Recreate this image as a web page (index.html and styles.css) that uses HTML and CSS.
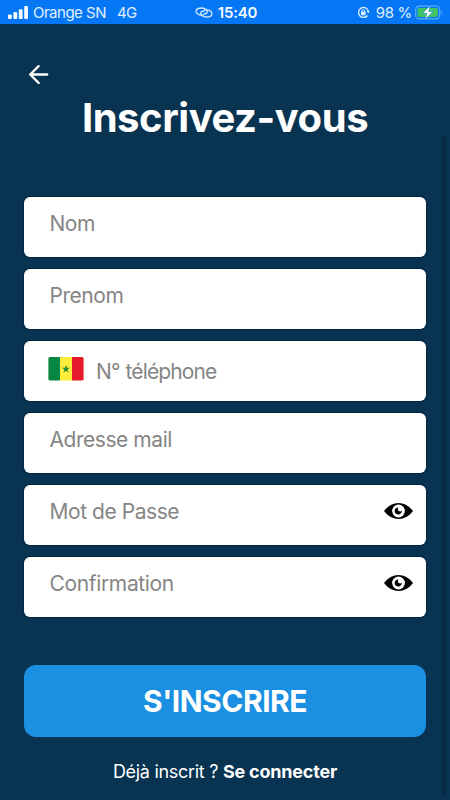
FILE: index.html
```html
<!DOCTYPE html>
<html lang="fr">
<head>
<meta charset="utf-8">
<title>Inscrivez-vous</title>
<link rel="stylesheet" href="styles.css">
</head>
<body>
<header class="status">
  <div class="status-left">
    <svg class="signal" width="20" height="13" viewBox="0 0 20 13" fill="#f4faff"><rect x="0" y="8.5" width="3.8" height="4.5" rx="1"/><rect x="5.4" y="6" width="3.8" height="7" rx="1"/><rect x="10.8" y="3.2" width="3.8" height="9.8" rx="1"/><rect x="16.2" y="0" width="3.8" height="13" rx="1"/></svg>
    <span class="carrier">Orange SN</span>
    <span class="network">4G</span>
  </div>
  <div class="status-center">
    <svg width="18" height="11" viewBox="0 0 18 11" fill="none" stroke="#d5eaff" stroke-width="1.300" stroke-linecap="round"><path d="M8.500 7.900C4.500 8.600 1 7 1 4.300S3.800 1 6.600 1c2.900 0 5.700 1.500 5.700 3.700 0 1.500-1.500 2.300-3.300 2.100"/><path d="M9.500 3.100C13.500 2.400 17 4 17 6.700S14.200 10 11.400 10c-2.900 0-5.700-1.500-5.700-3.700 0-1.500 1.500-2.300 3.300-2.100"/></svg>
    <span class="clock">15:40</span>
  </div>
  <div class="status-right">
    <svg width="13" height="13" viewBox="0 0 13 13" fill="none" stroke="#e2f1ff" stroke-width="1.300"><path d="M10.500 9.500A5 5 0 1 1 11.300 5"/><path d="M9.500 5h3.300l-1.600 2.300z" fill="#e2f1ff" stroke="none"/><rect x="4" y="5.800" width="4.600" height="3.400" rx=".5" fill="#e2f1ff" stroke="none"/><path d="M5 6V4.900a1.300 1.300 0 0 1 2.600 0V6" stroke-width="1"/></svg>
    <span class="percent">98 %</span>
    <svg class="battery" width="29" height="15" viewBox="0 0 29 15"><rect x=".7" y="1.200" width="24" height="12.600" rx="3.600" fill="none" stroke="#5cacf5" stroke-width="1.200"/><rect x="2.500" y="3" width="20.400" height="9" rx="2" fill="#3fc562"/><path d="M26.200 5.500c1.500.5 1.500 3.500 0 4z" fill="#5cacf5"/><path d="M15.200.6 7.600 8.300h4.200L10 14.400l8-7.900h-4.300z" fill="#fff" stroke="#0872e8" stroke-width=".5"/></svg>
  </div>
</header>
<main class="screen">
  <button class="back" type="button" aria-label="Retour">
    <svg width="21" height="20" viewBox="0 0 21 20" fill="none" stroke="#fff" stroke-width="2.300" stroke-linecap="round" stroke-linejoin="round"><path d="M19.200 10.500H2.200M10.600 2.100 2.200 10.500l8.400 8.400"/></svg>
  </button>
  <h1 class="title">Inscrivez-vous</h1>
  <form class="form">
    <div class="field"><span class="label nom">Nom</span></div>
    <div class="field"><span class="label prenom">Prenom</span></div>
    <div class="field phone">
      <svg class="flag" width="36" height="24" viewBox="0 0 36 24"><defs><clipPath id="round"><rect x=".4" width="35.200" height="23.500" rx="1.500"/></clipPath></defs><g clip-path="url(#round)"><path fill="#078543" d="M0 0h12v24H0z"/><path fill="#fcec3b" d="M12 0h12v24H12z"/><path fill="#e51b2b" d="M24 0h12v24H24z"/></g><path fill="#238c37" d="m18 8 1 2.800h3l-2.400 1.800.9 2.900-2.500-1.700-2.500 1.700.9-2.900-2.400-1.800h3z"/></svg>
      <span class="label tel">N° téléphone</span>
    </div>
    <div class="field"><span class="label mail">Adresse mail</span></div>
    <div class="field"><span class="label pass">Mot de Passe</span>
      <svg class="eye" width="29" height="16" viewBox="0 0 29 16"><path d="M0 8C4 2.800 9 0 14.500 0S25 2.800 29 8c-4 5.200-9 8-14.500 8S4 13.200 0 8z"/><circle cx="14.500" cy="8" r="6.400" fill="#fff"/><path d="M14.500 4.400a2.200 2.200 0 1 0 3.300 3.200 3.600 3.600 0 1 1-3.300-3.200z"/></svg>
    </div>
    <div class="field"><span class="label confirm">Confirmation</span>
      <svg class="eye" width="29" height="16" viewBox="0 0 29 16"><path d="M0 8C4 2.800 9 0 14.500 0S25 2.800 29 8c-4 5.200-9 8-14.500 8S4 13.200 0 8z"/><circle cx="14.500" cy="8" r="6.400" fill="#fff"/><path d="M14.500 4.400a2.200 2.200 0 1 0 3.300 3.200 3.600 3.600 0 1 1-3.300-3.200z"/></svg>
    </div>
    <button class="submit" type="button"><span>S'INSCRIRE</span></button>
  </form>
  <p class="login"><span>Déjà inscrit ?</span> <b>Se connecter</b></p>
  <div class="scrollbar"></div>
</main>
</body>
</html>
```
FILE: styles.css
```css
* { box-sizing: border-box; }
body {
  margin: 0;
  width: 450px;
  height: 800px;
  overflow: hidden;
  background: #083351;
  font-family: Inter, "Liberation Sans", sans-serif;
  color: #fff;
}
.status {
  height: 24px;
  background: #0577f5;
  display: grid;
  grid-template-columns: 1fr auto 1fr;
  align-items: center;
  padding: 0 6px 0 8px;
  font-size: 15px;
  line-height: 24px;
  color: #e0f0ff;
}
.status-left, .status-center, .status-right { display: flex; align-items: center; white-space: nowrap; }
.status-left span, .status-center span, .status-right span { position: relative; top: 1px; }
.status-right { justify-content: flex-end; }
.carrier { margin-left: 5px; letter-spacing: -0.5px; }
.network { margin-left: 11px; letter-spacing: -0.6px; }
.clock { margin-left: 5px; font-weight: 600; letter-spacing: -0.2px; color: #f4faff; }
.percent { margin: 0 3px 0 6px; letter-spacing: -0.3px; }
.screen { position: relative; height: 776px; padding: 0 24px; }
.back {
  display: block;
  border: 0;
  background: none;
  padding: 40px 4px 0;
  height: 60px;
}
.back svg { display: block; }
.title {
  margin: 9px 0 0;
  height: 50px;
  line-height: 50px;
  font-size: 40px;
  font-weight: 700;
  text-align: center;
  letter-spacing: -0.45px;
  white-space: nowrap;
}
.form { margin-top: 53.5px; }
.field {
  display: flex;
  height: 60px;
  margin-bottom: 12px;
  padding: 14px 13px 0 25.5px;
  background: #fff;
  border-radius: 6px;
  box-shadow: 0 0 1px 1px #052640;
}
.label {
  height: 26px;
  line-height: 26px;
  font-size: 21px;
  letter-spacing: -0.45px;
  color: #858585;
  white-space: nowrap;
}
.phone { padding: 16px 13px 0 24px; }
.tel { margin: 2px 0 0 12px; letter-spacing: -0.9px; word-spacing: 1px; }
.confirm { letter-spacing: -0.35px; }
.eye { margin: 4px 0 0 auto; }
.submit {
  display: block;
  width: 100%;
  height: 72px;
  margin-top: 48px;
  padding: 0;
  border: 0;
  border-radius: 12px;
  background: #1b8fe1;
  color: #fff;
  font: 700 30px/72px Inter, "Liberation Sans", sans-serif;
  letter-spacing: -0.5px;
}
.login {
  margin: 24.5px 0 0;
  text-align: center;
  font-size: 18px;
  line-height: 22px;
  white-space: nowrap;
  letter-spacing: -0.2px;
}
.login span { letter-spacing: -0.3px; }
.login b { font-weight: 700; }
.scrollbar {
  position: absolute;
  right: 4px;
  top: 111px;
  width: 4px;
  height: 661px;
  border-radius: 2px;
  background: #062a44;
}
```
